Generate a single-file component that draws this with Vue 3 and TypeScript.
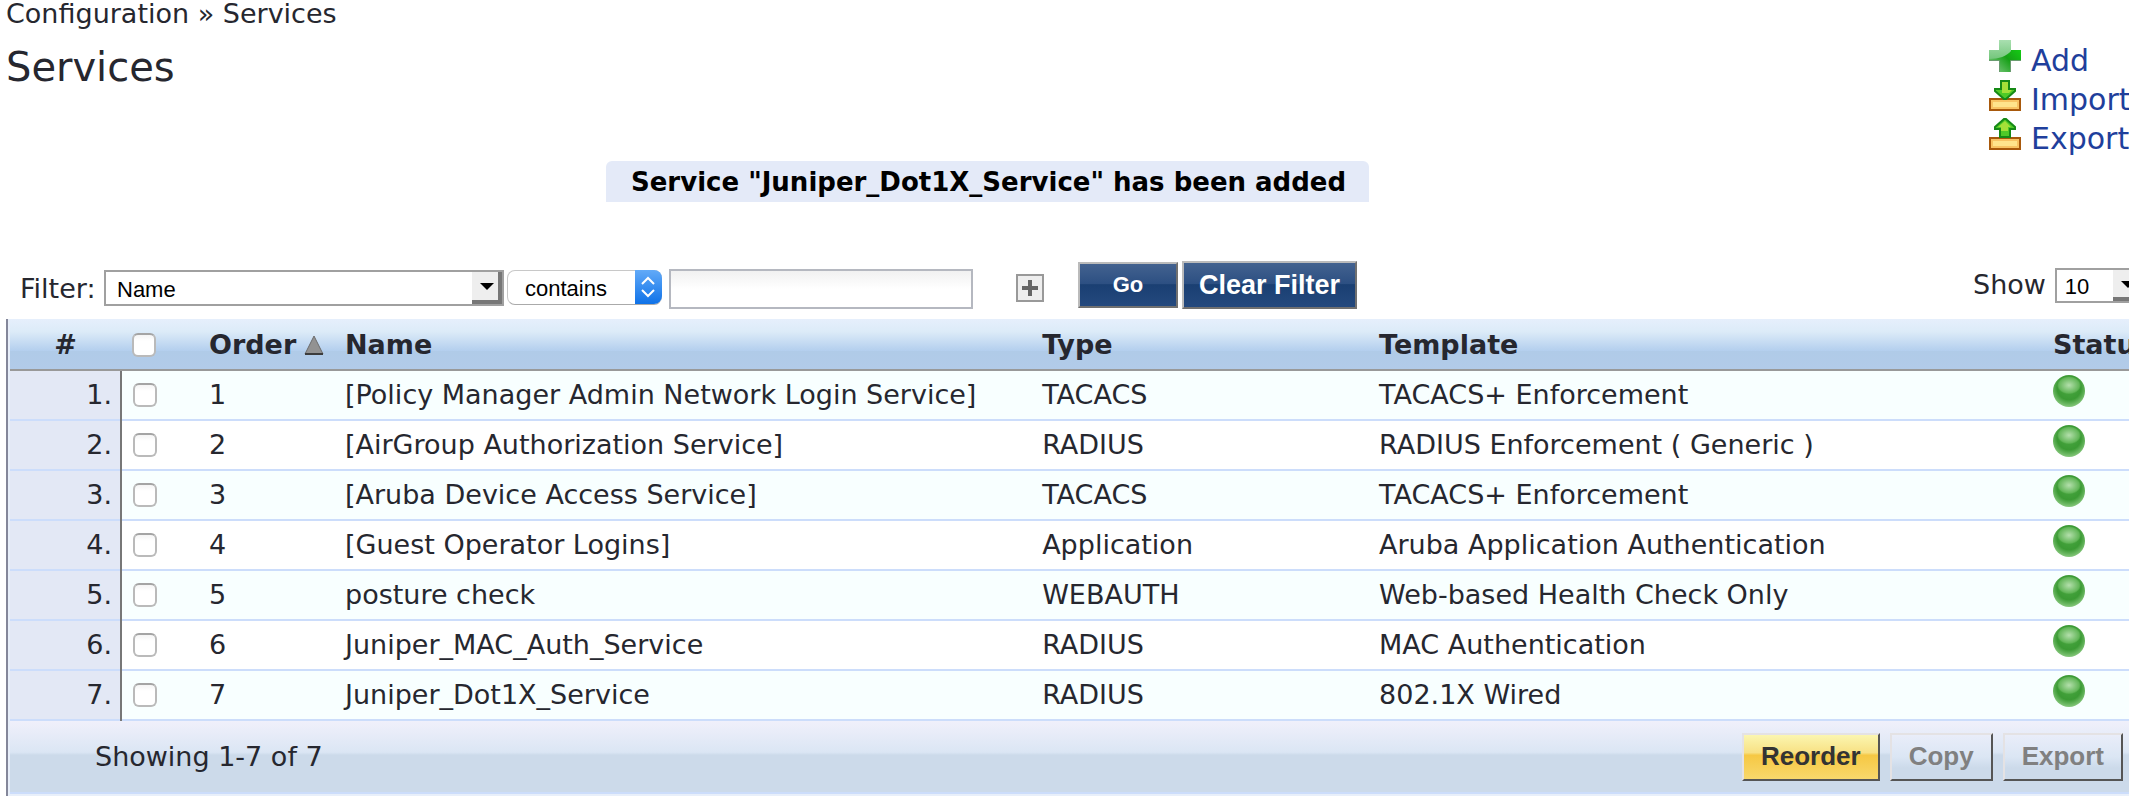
<script setup lang="ts">
import { computed, ref } from 'vue'

interface Service {
  order: number
  name: string
  type: string
  template: string
}

const services: Service[] = [
  { order: 1, name: '[Policy Manager Admin Network Login Service]', type: 'TACACS', template: 'TACACS+ Enforcement' },
  { order: 2, name: '[AirGroup Authorization Service]', type: 'RADIUS', template: 'RADIUS Enforcement ( Generic )' },
  { order: 3, name: '[Aruba Device Access Service]', type: 'TACACS', template: 'TACACS+ Enforcement' },
  { order: 4, name: '[Guest Operator Logins]', type: 'Application', template: 'Aruba Application Authentication' },
  { order: 5, name: 'posture check', type: 'WEBAUTH', template: 'Web-based Health Check Only' },
  { order: 6, name: 'Juniper_MAC_Auth_Service', type: 'RADIUS', template: 'MAC Authentication' },
  { order: 7, name: 'Juniper_Dot1X_Service', type: 'RADIUS', template: '802.1X Wired' },
]

const field = ref('Name')
const operator = ref('contains')
const query = ref('')
const pageSize = ref('10')
const selected = ref<number[]>([])

const allSelected = computed({
  get: () => selected.value.length === services.length,
  set: (on: boolean) => {
    selected.value = on ? services.map((s) => s.order) : []
  },
})
</script>

<template>
  <div class="page">
    <nav class="breadcrumb" aria-label="Breadcrumb">Configuration » Services</nav>

    <header class="head">
      <h1>Services</h1>
      <ul class="actions">
        <li>
          <a href="#add">
            <svg viewBox="0 0 32 32" width="32" height="32" aria-hidden="true">
              <defs>
                <linearGradient id="plusBase" x1="0" y1="1" x2="1" y2="0">
                  <stop offset="0" stop-color="#8fcf93" />
                  <stop offset="0.5" stop-color="#16a016" />
                  <stop offset="1" stop-color="#12e012" />
                </linearGradient>
                <linearGradient id="plusShine" x1="0" y1="0" x2="0" y2="1">
                  <stop offset="0" stop-color="#a9dfb0" />
                  <stop offset="1" stop-color="#74c67c" />
                </linearGradient>
              </defs>
              <path d="M10 0h12v10h10v11H22v11H10V21H0V10h10z" fill="url(#plusBase)" />
              <path d="M10 0h12v11C18 16 10 19 0 19v-9h10z" fill="url(#plusShine)" />
              <path d="M0 20.500h10.500V32M21.500 32V20.500H32" fill="none" stroke="#6a9c70" stroke-width="1" />
            </svg>
            <span>Add</span>
          </a>
        </li>
        <li>
          <a href="#import">
            <svg viewBox="0 0 32 32" width="32" height="32" aria-hidden="true">
              <rect x="1" y="20" width="30" height="11" fill="#ffe48c" stroke="#a8590c" stroke-width="2" />
              <rect x="3" y="22" width="26" height="7" fill="none" stroke="#f8c464" stroke-width="2" />
              <path d="M12 2h8v8h6v2L17 20h-2L6 12v-2h6z" fill="#4fca28" stroke="#168a16" stroke-width="2" />
              <path d="M13 3h6v8h4l-3 3h-7z" fill="#a4e038" />
            </svg>
            <span>Import</span>
          </a>
        </li>
        <li>
          <a href="#export">
            <svg viewBox="0 0 32 32" width="32" height="32" aria-hidden="true">
              <rect x="1" y="20" width="30" height="11" fill="#ffe48c" stroke="#a8590c" stroke-width="2" />
              <rect x="3" y="22" width="26" height="7" fill="none" stroke="#f8c464" stroke-width="2" />
              <path d="M11 19h10v-8h5V9L17 1h-2L6 9v2h5z" fill="#4fca28" stroke="#168a16" stroke-width="2" />
              <path d="M16 3l6 6h-3v4h-7V9h-3z" fill="#a4e038" />
            </svg>
            <span>Export</span>
          </a>
        </li>
      </ul>
    </header>

    <p class="notice" role="status">Service "Juniper_Dot1X_Service" has been added</p>

    <form class="filter" @submit.prevent>
      <label for="field">Filter:</label>
      <span class="drop drop-field">
        <select id="field" v-model="field">
          <option>Name</option>
          <option>Type</option>
          <option>Template</option>
        </select>
        <span class="bevel" aria-hidden="true"><i></i></span>
      </span>
      <span class="drop drop-operator">
        <select v-model="operator" aria-label="Operator">
          <option>contains</option>
          <option>equals</option>
        </select>
        <span class="stepper" aria-hidden="true">
          <svg viewBox="0 0 26 34" width="26" height="34">
            <path d="M7 14l6-6 6 6M7 20l6 6 6-6" fill="none" stroke="#fff" stroke-width="2" />
          </svg>
        </span>
      </span>
      <input v-model="query" class="query" type="text" aria-label="Filter value" />
      <button class="plus" type="button" aria-label="Add condition">
        <svg viewBox="0 0 24 24" width="24" height="24" aria-hidden="true">
          <path d="M4 12h16M12 4v16" stroke="#666" stroke-width="4" />
        </svg>
      </button>
      <button class="blue go" type="submit">Go</button>
      <button class="blue clear" type="button" @click="query = ''">Clear Filter</button>
      <div class="show">
        <label for="size">Show</label>
        <span class="drop drop-size">
          <select id="size" v-model="pageSize">
            <option>10</option>
            <option>20</option>
            <option>50</option>
          </select>
          <span class="bevel" aria-hidden="true"><i></i></span>
        </span>
      </div>
    </form>

    <section class="grid">
      <table>
        <colgroup>
          <col class="c-num" />
          <col class="c-check" />
          <col class="c-order" />
          <col class="c-name" />
          <col class="c-type" />
          <col />
          <col class="c-status" />
        </colgroup>
        <thead>
          <tr>
            <th class="hash">#</th>
            <th class="check"><input v-model="allSelected" type="checkbox" aria-label="Select all" /></th>
            <th>
              <span class="sort">Order
                <svg viewBox="0 0 20 20" width="20" height="20" aria-hidden="true">
                  <path d="M10 1l9 18H1z" fill="#929292" stroke="#6c6c6c" stroke-width="1" />
                  <path d="M1 19h18" stroke="#3c3c3c" stroke-width="2" />
                </svg>
              </span>
            </th>
            <th>Name</th>
            <th>Type</th>
            <th>Template</th>
            <th>Status</th>
          </tr>
        </thead>
        <tbody>
          <tr v-for="s in services" :key="s.order">
            <td class="num">{{ s.order }}.</td>
            <td class="check">
              <input v-model="selected" type="checkbox" :value="s.order" :aria-label="`Select ${s.name}`" />
            </td>
            <td>{{ s.order }}</td>
            <td>{{ s.name }}</td>
            <td>{{ s.type }}</td>
            <td>{{ s.template }}</td>
            <td class="status"><span class="ball" role="img" aria-label="Enabled"></span></td>
          </tr>
        </tbody>
      </table>
      <footer class="foot">
        <span>Showing 1-7 of 7</span>
        <div class="buttons">
          <button class="reorder" type="button">Reorder</button>
          <button type="button" disabled>Copy</button>
          <button type="button" disabled>Export</button>
        </div>
      </footer>
    </section>
  </div>
</template>

<style>
body {
  background: #fff;
  overflow-x: hidden;
}
</style>

<style scoped>
.page {
  overflow: hidden;
  color: #26272f;
  font: 27px/32px Verdana, 'DejaVu Sans', sans-serif;
  white-space: nowrap;
}
.page * {
  box-sizing: border-box;
}
.breadcrumb {
  padding-left: 6px;
  height: 28px;
  line-height: 28px;
}
.head {
  display: flex;
  justify-content: space-between;
  height: 133px;
}
h1 {
  margin: 15px 0 0 6px;
  font-size: 40px;
  line-height: 48px;
  font-weight: 400;
}
.actions {
  flex: none;
  width: 140px;
  margin: 12px 0 0;
  padding: 0;
  list-style: none;
  font-size: 30px;
  line-height: 41px;
}
.actions li {
  height: 39px;
}
.actions a {
  display: flex;
  gap: 10px;
  color: #1f3f9c;
  text-decoration: none;
}
.actions svg {
  flex: none;
}
.notice {
  width: 763px;
  margin: 0 auto;
  position: relative;
  left: -77px;
  padding: 2px 0 0 25px;
  border-radius: 6px 6px 0 0;
  background: #e4eaf8;
  color: #000;
  font-size: 26px;
  font-weight: 700;
  line-height: 39px;
}
.filter {
  display: flex;
  align-items: center;
  height: 68px;
  margin-top: 49px;
  padding: 0 0 0 20px;
}
.filter label {
  flex: none;
}
.drop {
  position: relative;
  flex: none;
  display: block;
}
.drop select {
  appearance: none;
  width: 100%;
  height: 100%;
  margin: 0;
  padding: 2px 0 0 11px;
  border: 2px solid #a0a0a0;
  border-radius: 0;
  background: #fff;
  color: #000;
  font: 22px 'Liberation Sans', Arial, sans-serif;
}
.drop-field {
  width: 400px;
  height: 36px;
  margin: 6px 3px 0 0;
}
.filter > label {
  width: 84px;
  padding-top: 8px;
}
.drop-operator {
  width: 155px;
  height: 35px;
  margin: 4px 7px 0 0;
}
.drop-operator select {
  padding-left: 17px;
  border: 1px solid #c8c8c8;
  border-bottom-color: #aaa;
  border-radius: 8px;
}
.stepper {
  position: absolute;
  top: 0;
  right: 0;
  width: 27px;
  height: 34px;
  border-radius: 0 8px 8px 0;
  background: linear-gradient(#62aaf8, #0f72e8);
  pointer-events: none;
}
.bevel {
  position: absolute;
  top: 2px;
  right: 2px;
  bottom: 2px;
  width: 30px;
  border-style: solid;
  border-width: 0 4px 4px 0;
  border-color: #eee #777 #777 #eee;
  background: #eee;
  pointer-events: none;
}
.bevel i {
  position: absolute;
  top: 11px;
  left: 8px;
  border: 7px solid transparent;
  border-top-color: #000;
  border-bottom: 0;
}
.query {
  flex: none;
  width: 304px;
  height: 40px;
  margin-top: 8px;
  padding: 0 8px;
  border: 2px solid #b5b8c0;
  background: linear-gradient(#f1f1f1, #fff 50%);
  font: 22px 'Liberation Sans', Arial, sans-serif;
}
.plus {
  flex: none;
  width: 28px;
  height: 28px;
  margin: 6px 34px 0 43px;
  padding: 0;
  border: 2px solid #999;
  background: #eee;
}
.plus svg {
  display: block;
}
button {
  font-family: 'Liberation Sans', Arial, sans-serif;
  font-weight: 700;
}
.blue {
  flex: none;
  padding: 0;
  border: 2px solid;
  border-color: #bbb #707070 #707070 #bbb;
  background: linear-gradient(#43628f, #2c4f82 48%, #1a3f72 49%, #24497e);
  color: #fff;
}
.go {
  width: 100px;
  height: 46px;
  margin-right: 4px;
  font-size: 22px;
}
.clear {
  width: 175px;
  height: 48px;
  font-size: 27px;
}
.show {
  flex: none;
  display: flex;
  gap: 9px;
  width: 156px;
  margin-left: auto;
}
.show label {
  padding-top: 1px;
}
.drop-size {
  width: 90px;
  height: 35px;
}
.drop-size select {
  padding-left: 8px;
}
.grid {
  padding-left: 2px;
  margin-left: 6px;
  border-left: 2px solid #84879a;
  background: #e8effa;
  padding-bottom: 2px;
}
table {
  width: 100%;
  border-collapse: collapse;
  table-layout: fixed;
}
.c-num { width: 111px; }
.c-check { width: 77px; }
.c-order { width: 136px; }
.c-name { width: 32.9%; }
.c-type { width: 15.9%; }
.c-status { width: 87px; }
th,
td {
  height: 50px;
  padding: 0 0 0 11px;
  text-align: left;
  line-height: 32px;
  vertical-align: middle;
}
th {
  height: 51px;
  padding-top: 2px;
  border-bottom: 2px solid #999;
}
thead tr {
  background: linear-gradient(#e6effc, #dcebf8 25%, #b4cfee 62%, #b0cbe8 63%, #b2cbe9);
}
th.hash {
  padding: 2px 0 0;
  text-align: center;
}
tbody tr {
  background: #fff;
  border-bottom: 2px solid #ccddfb;
}
tbody tr:nth-child(odd) {
  background: #f8ffff;
}
td.num {
  padding: 0 8px 0 0;
  border-right: 2px solid #777;
  background: #e3e8f5;
  text-align: right;
}
input[type='checkbox'] {
  appearance: none;
  display: block;
  width: 24px;
  height: 24px;
  margin: 0;
  border: 2px solid #bababa;
  border-top-color: #a4a4a4;
  border-radius: 6px;
  background: linear-gradient(#f4f4f4, #fff 30%);
}
.sort {
  display: flex;
  align-items: center;
  gap: 8px;
}
.status {
  vertical-align: top;
  padding-top: 4px;
}
.ball {
  display: block;
  width: 32px;
  height: 32px;
  border-radius: 50%;
  background:
    radial-gradient(ellipse 12px 9px at 50% 32%, #b4dfac 0, #63b659 85%, transparent 100%),
    radial-gradient(circle at 50% 40%, #4aa842 0, #3b9a34 48%, #8aca80 78%, #dff2dc 100%);
}
.foot {
  display: flex;
  align-items: center;
  justify-content: space-between;
  height: 73px;
  padding: 0 6px 0 85px;
  border-bottom: 2px solid #ccddfb;
  background: linear-gradient(#f0f0fb, #dbe6f4 44%, #ccdaea 48%, #ccdaea);
}
.foot > span {
  padding-top: 1px;
}
.buttons {
  display: flex;
  gap: 10px;
}
.buttons button {
  height: 48px;
  padding: 0 17px;
  border: 2px solid;
  border-color: #e4e2e4 #555 #555 #e4e2e4;
  background: linear-gradient(#e9edf9, #dbe6f4 50%, #ccdaea 75%);
  color: #808080;
  font-size: 26px;
}
.buttons .reorder {
  background: linear-gradient(#fbf6b0, #f8e184 40%, #f6c843 46%, #f8d86c);
  color: #333;
}
</style>
